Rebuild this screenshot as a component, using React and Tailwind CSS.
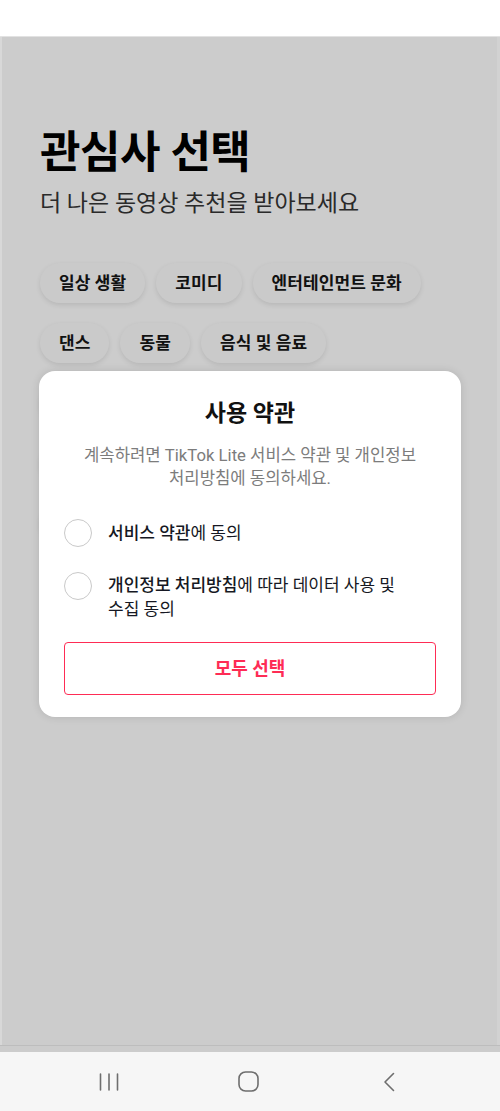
import React from 'react'

const chipsTop = ['일상 생활', '코미디', '엔터테인먼트 문화']
const chipsBottom = ['댄스', '동물', '음식 및 음료']

function Chip({ label }) {
  return (
    <div className="h-10 px-[19px] flex items-center rounded-full bg-[#cacaca] shadow-[0_2px_5px_rgba(0,0,0,0.10)] text-[17px] font-bold text-[#111] leading-none tracking-[0.1px]">
      {label}
    </div>
  )
}

// 모달 뒤에 가려진 칩 (그림자만 살짝 보임)
function HiddenChip({ w }) {
  return <div className={`h-10 rounded-full bg-[#cacaca] shadow-[0_2px_5px_rgba(0,0,0,0.10)] ${w}`} />
}

function Radio() {
  return <div className="w-[28px] h-[28px] shrink-0 rounded-full border-[1.5px] border-[#c9c9c9] bg-white" />
}

// 약관 동의 모달
function TermsModal() {
  return (
    <div className="absolute left-[37px] top-[334px] w-[422px] bg-white rounded-[16px] shadow-[0_0_8px_rgba(0,0,0,0.12)] px-[25px] pt-[28px] pb-[22px] flex flex-col">
      <div className="text-center text-[23px] leading-[30px] font-bold text-[#111]">사용 약관</div>
      <div className="mt-[15px] text-center text-[16.7px] leading-[23px] text-[#7c7c7c] break-keep">
        계속하려면 TikTok Lite 서비스 약관 및 개인정보
        <br />
        처리방침에 동의하세요.
      </div>

      <div className="mt-[29px] flex items-center gap-[16px]">
        <Radio />
        <div className="text-[17px] leading-[24px] text-[#161823]">
          <span className="font-medium">서비스 약관</span>에 동의
        </div>
      </div>

      <div className="mt-[25px] flex items-start gap-[16px] pr-[6px]">
        <Radio />
        <div className="text-[17px] leading-[24px] text-[#161823] pt-[1px] break-keep">
          <span className="font-medium">개인정보 처리방침</span>에 따라 데이터 사용 및 수집 동의
        </div>
      </div>

      <button className="mt-[21px] h-[53px] w-full rounded-[4px] border-[1.5px] border-[#fe2c55] text-[#fe2c55] text-[18px] font-bold flex items-center justify-center">
        모두 선택
      </button>
    </div>
  )
}

function NavBar() {
  return (
    <div className="h-[59px] bg-[#f6f6f6] flex items-center justify-center gap-[80px] pr-[3px]">
      <div className="w-[60px] flex justify-center">
        <svg width="20" height="20" viewBox="0 0 20 20" fill="none" stroke="#6e6e6e" strokeWidth="1.6" strokeLinecap="round">
          <path d="M1.5 2v16M10 2v16M18.5 2v16" />
        </svg>
      </div>
      <div className="w-[60px] flex justify-center">
        <svg width="21" height="21" viewBox="0 0 21 21" fill="none" stroke="#6e6e6e" strokeWidth="1.6">
          <rect x="1" y="1" width="19" height="19" rx="6.5" />
        </svg>
      </div>
      <div className="w-[60px] flex justify-center">
        <svg width="12" height="20" viewBox="0 0 12 20" fill="none" stroke="#6e6e6e" strokeWidth="1.6" strokeLinecap="round" strokeLinejoin="round">
          <path d="M10.5 1.5L2 10l8.5 8.5" />
        </svg>
      </div>
    </div>
  )
}

export default function App() {
  return (
    <div
      className="w-[500px] h-[1111px] flex flex-col overflow-hidden bg-white"
      style={{ fontFamily: 'Roboto, "Noto Sans CJK KR", sans-serif' }}
    >
      <div className="h-[37px] bg-white border-b border-[#e2e2e2]" />

      <div className="relative flex-1 bg-[#cccccc] border-l-2 border-[#d8d8d8] border-r-[3px] border-r-[#d2d2d2]">
        <div className="pl-[38px] pt-[89px]">
          <div className="text-[44px] leading-[54px] font-bold text-black tracking-[-0.5px]">관심사 선택</div>
          <div className="mt-[8px] text-[23px] leading-[32px] text-[#2a2a2a]">더 나은 동영상 추천을 받아보세요</div>

          <div className="mt-[43px] flex flex-col gap-5">
            <div className="flex gap-[11px]">
              {chipsTop.map((c) => (
                <Chip key={c} label={c} />
              ))}
            </div>
            <div className="flex gap-[11px]">
              {chipsBottom.map((c) => (
                <Chip key={c} label={c} />
              ))}
            </div>
            <div className="flex gap-[11px]">
              <HiddenChip w="w-[120px]" />
              <HiddenChip w="w-[90px]" />
            </div>
            <div className="flex gap-[11px]">
              <HiddenChip w="w-[80px]" />
              <HiddenChip w="w-[100px]" />
            </div>
            <div className="flex gap-[11px]">
              <HiddenChip w="w-[90px]" />
              <HiddenChip w="w-[110px]" />
            </div>
          </div>
        </div>

        <TermsModal />
      </div>

      <div className="h-[7px] bg-[#cccccc] border-t border-[#bdbdbd]" />
      <NavBar />
    </div>
  )
}
